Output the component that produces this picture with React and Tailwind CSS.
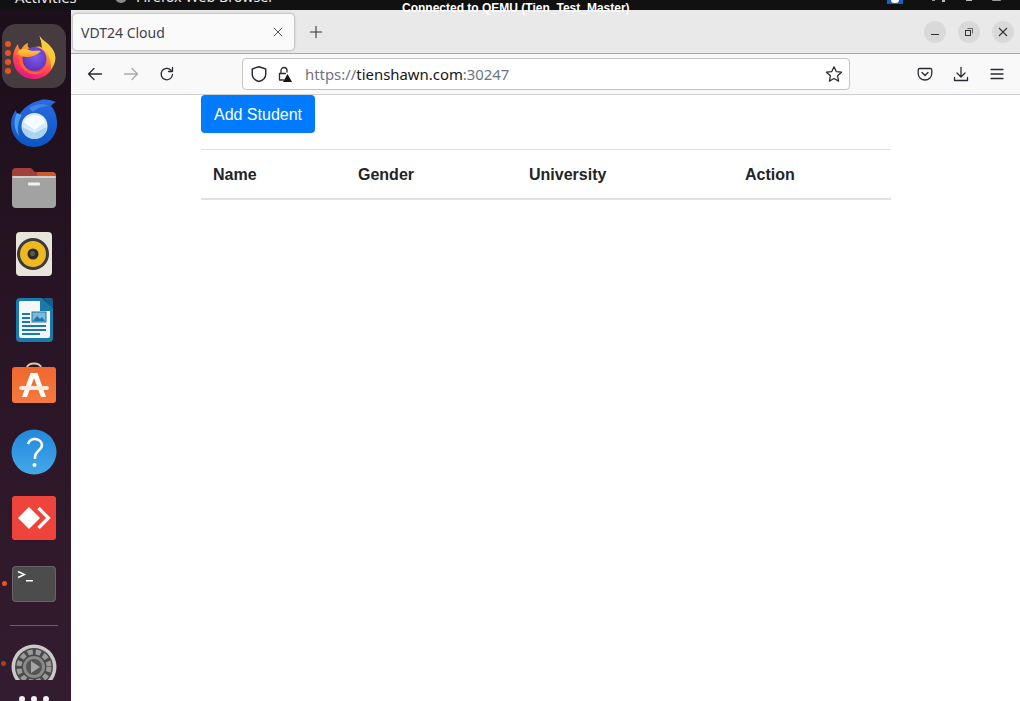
import React from "react";

const Firefox = () => (
  <svg width="44" height="46" viewBox="0 0 44 46">
    <defs>
      <linearGradient id="ffa" x1="0.75" y1="0" x2="0.35" y2="1">
        <stop offset="0" stopColor="#ffe14a" />
        <stop offset="0.4" stopColor="#ff9a2b" />
        <stop offset="0.72" stopColor="#ff3d55" />
        <stop offset="1" stopColor="#e31587" />
      </linearGradient>
      <radialGradient id="ffb" cx="0.55" cy="0.4" r="0.7">
        <stop offset="0" stopColor="#7b5cf0" />
        <stop offset="1" stopColor="#5b2db0" />
      </radialGradient>
      <linearGradient id="ffc" x1="0" y1="0" x2="0" y2="1">
        <stop offset="0" stopColor="#ffd23a" />
        <stop offset="1" stopColor="#ff9528" />
      </linearGradient>
    </defs>
    <path d="M27 1C28 6 33 8 37 12C42 17 44 22 43 28C41 38 33 46 22 46C10 46 1 37 1 25C1 19 3 15 6 11C6 14 7 16 9 17C10 14 13 11 16 10C15 13 16 15 19 16C23 13 28 13 30 15C30 9 28 5 27 1Z" fill="url(#ffa)" />
    <path d="M27 1C28 6 33 8 37 12C42 17 44 22 43 28C42 31 41 33 39 36C40 27 36 20 30 15C30 9 28 5 27 1Z" fill="#ffc93a" />
    <circle cx="22.500" cy="26" r="12" fill="url(#ffb)" />
    <path d="M5 20C9 15 13 15 17 17C21 19 25 17 29 18C25 22 20 24 15 24C11 24 7 23 5 20Z" fill="url(#ffc)" />
    <path d="M10 24C10 33 16 39 24 39C29 39 33 37 35 33C32 42 20 44 12 37C8 33 6 28 7 22Z" fill="#ff6a2e" opacity="0.85" />
  </svg>
);

const Thunderbird = () => (
  <svg width="48" height="48" viewBox="0 0 48 48">
    <defs>
      <linearGradient id="tb" x1="0.5" y1="0" x2="0.5" y2="1">
        <stop offset="0" stopColor="#2a6be0" />
        <stop offset="1" stopColor="#0a55c4" />
      </linearGradient>
    </defs>
    <path d="M1 25C1 19 3 15 6 11C6 14 7 15 9 16C14 8 22 3 31 1C36 0 41 1 46 3C44 4 42 5 41 7C45 11 47 18 47 25C47 37 37 48 24 48C11 48 1 37 1 25Z" fill="url(#tb)" />
    <circle cx="24.500" cy="27" r="13" fill="#d6ebf9" />
    <path d="M14 23C16 19 20 16 24.500 16C29 16 33 19 35 23L24.500 31Z" fill="#f8fcff" />
    <path d="M12 28L24.500 34L37 28C36 35 31 40 24.500 40C18 40 13 35 12 28Z" fill="#a9d3f0" />
    <path d="M7 14C3 21 4 31 9 37C7 30 8 22 12 16Z" fill="#4b9df0" />
    <path d="M19 9C25 5 33 4 39 7C33 7 27 9 23 13Z" fill="#4386ea" />
  </svg>
);

const Files = () => (
  <svg width="46" height="42" viewBox="0 0 46 42">
    <path d="M1 6a4 4 0 0 1 4-4h14c3 0 3 4 6 4h16a4 4 0 0 1 4 4v10H1z" fill="#a2403c" />
    <path d="M26 6h15a4 4 0 0 1 4 4v6H26z" fill="#d0582a" />
    <rect x="1" y="10" width="44" height="32" rx="4" fill="#a2a2a2" />
    <rect x="1" y="10" width="44" height="2" rx="1" fill="#cfcfcf" />
    <rect x="17" y="16.500" width="12" height="3" rx="1" fill="#f3f3f3" />
  </svg>
);

const Rhythmbox = () => (
  <svg width="38" height="46" viewBox="0 0 38 46">
    <rect x="1" y="1" width="36" height="44" rx="4" fill="#e7e4da" />
    <circle cx="18" cy="23" r="16" fill="#3a3a3c" />
    <circle cx="18" cy="23" r="13" fill="#eeb91e" />
    <circle cx="18" cy="23" r="5.500" fill="#2b2b2b" />
    <circle cx="17.500" cy="22.500" r="2.500" fill="#5a5a5a" />
  </svg>
);

const Writer = () => (
  <svg width="38" height="46" viewBox="0 0 38 46">
    <path d="M4 1h22l11 10v30a4 4 0 0 1-4 4H4a4 4 0 0 1-4-4V5a4 4 0 0 1 4-4z" fill="#1a7aab" />
    <path d="M4 4h20v10h10v25a2 2 0 0 1-2 2H5a2 2 0 0 1-2-2V5z" fill="#f4f8fb" />
    <path d="M27 1h8a2 2 0 0 1 2 2v9z" fill="#14608a" />
    <rect x="6" y="16" width="8" height="2" fill="#1a7aab" />
    <rect x="6" y="20" width="8" height="2" fill="#1a7aab" />
    <rect x="6" y="24" width="8" height="2" fill="#1a7aab" />
    <rect x="6" y="28" width="24" height="2" fill="#1a7aab" />
    <rect x="6" y="32" width="24" height="2" fill="#1a7aab" />
    <rect x="6" y="36" width="18" height="2" fill="#1a7aab" />
    <rect x="16" y="15" width="14" height="10" fill="#7fb8d8" stroke="#1a7aab" />
    <path d="M17 24l4-5 3 3 2-2 3 4z" fill="#1a7aab" />
  </svg>
);

const Software = () => (
  <svg width="44" height="44" viewBox="0 0 44 44">
    <defs>
      <linearGradient id="sw" x1="0" y1="0" x2="0" y2="1">
        <stop offset="0" stopColor="#f0682f" />
        <stop offset="1" stopColor="#f47a3e" />
      </linearGradient>
    </defs>
    <path d="M15 10V7c0-6 14-6 14 0v3" fill="none" stroke="#e8c8a0" strokeWidth="2" />
    <rect x="0" y="6" width="44" height="36" rx="3" fill="url(#sw)" />
    <path d="M18.500 12h7l8.500 24h-5l-7-19-7 19h-5z" fill="#fff" />
    <rect x="7" y="25" width="30" height="4" rx="2" fill="#fde9dd" />
  </svg>
);

const Help = () => (
  <svg width="46" height="46" viewBox="0 0 46 46">
    <defs>
      <linearGradient id="hp" x1="0" y1="0" x2="0" y2="1">
        <stop offset="0" stopColor="#2288dc" />
        <stop offset="1" stopColor="#44a8e8" />
      </linearGradient>
    </defs>
    <circle cx="23" cy="23" r="22.500" fill="url(#hp)" />
    <path d="M17 15c1-3 3-5 7-5 4 0 7 3 7 6 0 5-7 6-7 12v2" fill="none" stroke="#fff" strokeWidth="2.500" />
    <circle cx="23.500" cy="36" r="2" fill="#fff" />
  </svg>
);

const AnyDesk = () => (
  <svg width="44" height="44" viewBox="0 0 44 44">
    <rect width="44" height="44" rx="3" fill="#ef443b" />
    <path d="M17 11l11 11-11 11L6 22z" fill="#fff" />
    <path d="M26.500 12l10 10-10 10" fill="none" stroke="#fff" strokeWidth="3.200" />
  </svg>
);

const Terminal = () => (
  <svg width="44" height="36" viewBox="0 0 44 36">
    <rect width="44" height="36" rx="4" fill="#4c4c4c" />
    <rect x="0.500" y="0.500" width="43" height="35" rx="3.500" fill="none" stroke="#666" />
    <path d="M6 5.500l6.500 3-6.500 3" fill="none" stroke="#fff" strokeWidth="1.400" />
    <rect x="14" y="14" width="7" height="1.500" fill="#fff" />
  </svg>
);

const Settings = () => (
  <svg width="46" height="36" viewBox="0 0 46 36">
    <circle cx="23" cy="23" r="22.500" fill="#c9c9c9" />
    <circle cx="23" cy="23" r="19" fill="#4a4a4a" />
    <circle cx="23" cy="23" r="15" fill="none" stroke="#9a9a9a" strokeWidth="5" strokeDasharray="5 3" />
    <circle cx="23" cy="23" r="11" fill="#8a8a8a" />
    <circle cx="23" cy="23" r="8" fill="#555" />
    <path d="M20 17l9 6-9 6z" fill="#a5a5a5" />
  </svg>
);

const Dock = () => (
  <aside className="w-[71px] shrink-0 h-[691px] overflow-hidden bg-gradient-to-b from-[#1c0e1a] via-[#2a1526] to-[#331c2f] flex flex-col items-center">
    <div className="mt-[14px] w-[64px] h-[64px] rounded-[14px] bg-[#463c40] flex items-center justify-center relative mr-[3px] shrink-0">
      <Firefox />
      <div className="absolute left-[3px] top-[17px] flex flex-col gap-[3px]">
        <span className="w-[6px] h-[6px] rounded-full bg-[#e95420]" />
        <span className="w-[6px] h-[6px] rounded-full bg-[#e95420]" />
        <span className="w-[6px] h-[6px] rounded-full bg-[#e95420]" />
        <span className="w-[6px] h-[6px] rounded-full bg-[#e95420]" />
      </div>
    </div>
    <div className="mt-[11px] h-[48px] shrink-0 mr-[3px]"><Thunderbird /></div>
    <div className="mt-[19px] h-[42px] shrink-0 mr-[3px]"><Files /></div>
    <div className="mt-[23px] h-[46px] shrink-0 mr-[3px]"><Rhythmbox /></div>
    <div className="mt-[20px] h-[46px] shrink-0 mr-[2px]"><Writer /></div>
    <div className="mt-[18px] h-[44px] shrink-0 mr-[3px]"><Software /></div>
    <div className="mt-[24px] h-[46px] shrink-0 mr-[3px]"><Help /></div>
    <div className="mt-[21px] h-[44px] shrink-0 mr-[3px]"><AnyDesk /></div>
    <div className="mt-[26px] h-[36px] shrink-0 mr-[3px] relative">
      <Terminal />
      <span className="absolute left-[-10px] top-[15px] w-[5px] h-[5px] rounded-full bg-[#e95420]" />
    </div>
    <div className="mt-[23px] h-px w-[48px] shrink-0 bg-[#6e5a69] mr-[3px]" />
    <div className="mt-[18px] h-[36px] shrink-0 mr-[3px] relative">
      <Settings />
      <span className="absolute left-[-10px] top-[17px] w-[5px] h-[5px] rounded-full bg-[#a8401c]" />
    </div>
    <div className="mt-[16px] flex gap-[6px] shrink-0 mr-[3px]">
      <span className="w-[6px] h-[6px] rounded-sm bg-[#f2f2f2]" />
      <span className="w-[6px] h-[6px] rounded-sm bg-[#f2f2f2]" />
      <span className="w-[6px] h-[6px] rounded-sm bg-[#f2f2f2]" />
    </div>
  </aside>
);

const Stroke = ({ children, w = 16, h = 16, color = "#2b2a33", sw = 1.300 }) => (
  <svg width={w} height={h} viewBox="0 0 16 16" fill="none" stroke={color} strokeWidth={sw} strokeLinecap="round" strokeLinejoin="round">
    {children}
  </svg>
);

const WinBtn = ({ children }) => (
  <span className="w-[22px] h-[22px] rounded-full bg-[#d9d9d9] flex items-center justify-center">{children}</span>
);

const TabBar = () => (
  <div className="h-[44px] bg-[#e9e9e9] border-b border-[#a9a9a9] flex items-start shrink-0">
    <div className="ml-[2px] mt-[4px] w-[221px] h-[36px] bg-[#fafafa] rounded-[4px] shadow-[0_0_3px_rgba(0,0,0,0.4)] flex items-center pl-[8px] pr-[9px] justify-between">
      <span className="text-[14px] text-[#3d4250] font-['Noto_Sans',sans-serif]">VDT24 Cloud</span>
      <Stroke w={14} h={14} color="#4a4a4f" sw={1.100}><path d="M3.500 3.500l9 9M12.500 3.500l-9 9" /></Stroke>
    </div>
    <div className="ml-[15px] mt-[15px]">
      <Stroke w={14} h={14} color="#333" sw={1.200}><path d="M8 1.500v13M1.500 8h13" /></Stroke>
    </div>
    <div className="ml-auto mr-[6px] mt-[11px] flex gap-[12px]">
      <WinBtn><svg width="10" height="10" viewBox="0 0 10 10"><rect x="1" y="7" width="8" height="1" fill="#333" /></svg></WinBtn>
      <WinBtn>
        <svg width="10" height="10" viewBox="0 0 10 10" fill="none" stroke="#333">
          <rect x="1.500" y="3.500" width="5" height="5" />
          <path d="M3.500 1.500h5v5" strokeWidth="0.700" />
        </svg>
      </WinBtn>
      <WinBtn><svg width="10" height="10" viewBox="0 0 10 10" stroke="#333" strokeWidth="1.100"><path d="M1 1l8 8M9 1l-8 8" /></svg></WinBtn>
    </div>
  </div>
);

const Toolbar = () => (
  <div className="h-[41px] bg-[#f9f9f9] border-b border-[#cfcfd3] flex items-center shrink-0">
    <div className="ml-[16px] flex items-center gap-[20px]">
      <Stroke><path d="M14.500 8h-13M7 2.500L1.500 8 7 13.500" /></Stroke>
      <Stroke color="#a9a9ad"><path d="M1.500 8h13M9 2.500L14.500 8 9 13.500" /></Stroke>
      <Stroke><path d="M13.500 8.500A5.700 5.700 0 1 1 12 4.200M13.500 1.500v4h-4" /></Stroke>
    </div>
    <div className="ml-[67px] w-[608px] h-[32px] bg-white border border-[#c4c4c4] rounded-[4px] flex items-center pl-[7px] pr-[6px]">
      <Stroke w={18} h={18}><path d="M8 1.500l6 2v4.500c0 3.500-2.500 5.700-6 6.700-3.500-1-6-3.200-6-6.700V3.500z" /></Stroke>
      <span className="ml-[8px] relative w-[16px] h-[16px]">
        <Stroke><path d="M5 7V4.500a3 3 0 0 1 6 0V6M3.500 7.500h6M3.500 7.500v6.500h4" /></Stroke>
        <svg className="absolute left-[7px] top-[8px]" width="9" height="8" viewBox="0 0 9 8"><path d="M4.500 0L9 8H0z" fill="#15141a" /></svg>
      </span>
      <span className="ml-[13px] text-[14.9px] font-['Noto_Sans',sans-serif] text-[#6e7380]">
        https://<span className="text-[#15141a]">tienshawn.com</span>:30247
      </span>
      <span className="ml-auto">
        <Stroke w={18} h={18} sw={1.100}><path d="M8 1.500l2 4.300 4.700.6-3.500 3.200.9 4.700L8 12l-4.100 2.300.9-4.700L1.300 6.400 6 5.800z" /></Stroke>
      </span>
    </div>
    <div className="ml-auto mr-[15px] flex items-center gap-[20px]">
      <Stroke><path d="M2.500 2.500h11a1.500 1.500 0 0 1 1.300 1.500v3.500c0 3.800-3.200 6.500-6.800 6.500S1.200 11.300 1.200 7.500V4a1.500 1.500 0 0 1 1.300-1.500zM5 6.500l3 3 3-3" /></Stroke>
      <Stroke><path d="M8 1.500v9M4 7l4 4 4-4M1.500 11.500v3h13v-3" /></Stroke>
      <Stroke><path d="M2 3.500h12M2 8h12M2 12.500h12" /></Stroke>
    </div>
  </div>
);

const Page = () => (
  <main className="flex-1 bg-white pl-[130px] font-['Liberation_Sans',sans-serif]">
    <button className="w-[114px] h-[38px] pt-[2px] bg-[#007bff] text-white text-[16px] rounded-[4px] block">Add Student</button>
    <div className="mt-[16px] w-[690px] border-t border-[#dee2e6] border-b-2 grid grid-cols-[145px_171px_216px_158px] text-[16px] font-bold text-[#212529] leading-[24px]">
      <div className="px-[12px] pt-[13px] pb-[11px]">Name</div>
      <div className="px-[12px] pt-[13px] pb-[11px]">Gender</div>
      <div className="px-[12px] pt-[13px] pb-[11px]">University</div>
      <div className="px-[12px] pt-[13px] pb-[11px]">Action</div>
    </div>
  </main>
);

const TopBar = () => (
  <div className="h-[10px] bg-[#111111] overflow-hidden flex items-end shrink-0 text-[14.8px] leading-[20px] font-['Noto_Sans',sans-serif] text-[#e8e8e8] relative">
    <span className="ml-[15px] mb-[3px]">Activities</span>
    <span className="absolute left-[115px] top-[-9px] w-[12px] h-[12px] rounded-full bg-[#8a8a8a]" />
    <span className="absolute left-[136px] top-[-13px] text-[14.3px]">Firefox Web Browser</span>
    <span className="absolute left-[887px] top-0 w-[16px] h-[4px] bg-[#1a5fc0]" />
    <span className="absolute left-[891px] top-[-3px] w-[8px] h-[6px] rounded-full bg-white" />
    <span className="absolute left-[932px] top-0 w-[3px] h-px bg-[#9a9a9a]" />
    <span className="absolute left-[942px] top-0 w-[3px] h-[2px] bg-[#bdbdbd]" />
    <span className="absolute left-[966px] top-0 w-[6px] h-px bg-[#bdbdbd]" />
    <span className="absolute left-[992px] top-0 w-[9px] h-px rounded-b-full bg-[#9a9a9a]" />
  </div>
);

export default function App() {
  return (
    <div className="w-[1020px] h-[701px] overflow-hidden flex flex-col relative bg-white">
      <TopBar />
      <div className="flex flex-1 min-h-0">
        <Dock />
        <div className="flex-1 flex flex-col min-w-0">
          <TabBar />
          <Toolbar />
          <Page />
        </div>
      </div>
      <span className="absolute left-[402px] top-[1px] text-[12px] leading-[14px] font-bold text-white font-['Liberation_Sans',sans-serif]">Connected to QEMU (Tien_Test_Master)</span>
    </div>
  );
}
